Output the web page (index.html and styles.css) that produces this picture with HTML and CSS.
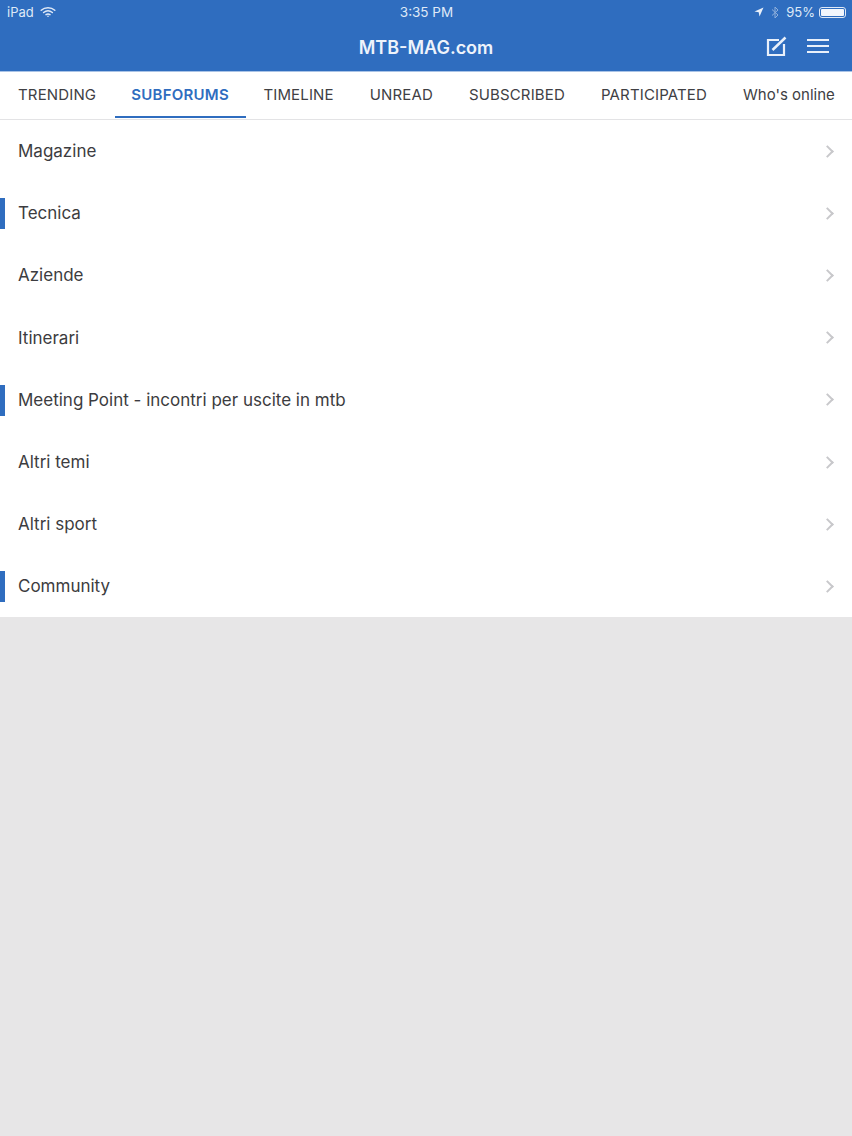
FILE: index.html
```html
<!DOCTYPE html>
<html lang="en">
<head>
    <meta charset="UTF-8">
    <title>MTB-MAG.com</title>
    <link rel="stylesheet" href="styles.css">
</head>
<body>
    <header class="top">
        <div class="status">
            <div class="status-left">
                <span>iPad</span>
                <svg class="wifi" width="16" height="12" viewBox="0 0 16 12" fill="none" stroke="#dfe9f7" stroke-width="1.5" stroke-linecap="round">
                    <path d="M1.2 4.2C5 .9 11 .9 14.8 4.2"/>
                    <path d="M3.6 6.5c2.6-2 6.2-2 8.8 0"/>
                    <path d="M6 8.6c1.2-.8 2.8-.8 4 0"/>
                    <circle cx="8" cy="10.3" r=".8" fill="#dfe9f7" stroke="none"/>
                </svg>
            </div>
            <div class="status-time">3:35 PM</div>
            <div class="status-right">
                <svg class="arrow" width="10" height="10" viewBox="0 0 10 10"><path d="M9.5 .5L.5 4.600l4.200.7.8 4.200z" fill="#e8eff9"/></svg>
                <svg class="bluetooth" width="8" height="13" viewBox="0 0 8 13" fill="none" stroke="#8fb0dc" stroke-width="1"><path d="M1 3.500l6 5.500-3 3V1l3 3-6 5.500"/></svg>
                <span>95%</span>
                <div class="battery"><div class="battery-level"></div></div>
            </div>
        </div>
        <div class="navbar">
            <div class="navbar-title">MTB-MAG.com</div>
            <div class="navbar-icons">
                <svg width="22" height="22" viewBox="0 0 22 22" fill="none" stroke="#e9f0fa">
                    <path d="M14 5H3v15h16V9" stroke-width="2.200"/>
                    <path d="M7.500 15L20.500 2.500" stroke-width="2.500"/>
                </svg>
                <div class="menu-icon"><span></span><span></span><span></span></div>
            </div>
        </div>
    </header>

    <nav class="tabs">
        <a class="tab">TRENDING</a>
        <a class="tab tab-active">SUBFORUMS</a>
        <a class="tab">TIMELINE</a>
        <a class="tab">UNREAD</a>
        <a class="tab">SUBSCRIBED</a>
        <a class="tab">PARTICIPATED</a>
        <a class="tab tab-plain">Who's online</a>
    </nav>

    <ul class="forums">
        <li class="forum"><span>Magazine</span><i class="chevron"></i></li>
        <li class="forum forum-marked"><span>Tecnica</span><i class="chevron"></i></li>
        <li class="forum"><span>Aziende</span><i class="chevron"></i></li>
        <li class="forum"><span>Itinerari</span><i class="chevron"></i></li>
        <li class="forum forum-marked"><span>Meeting Point - incontri per uscite in mtb</span><i class="chevron"></i></li>
        <li class="forum"><span>Altri temi</span><i class="chevron"></i></li>
        <li class="forum"><span>Altri sport</span><i class="chevron"></i></li>
        <li class="forum forum-marked"><span>Community</span><i class="chevron"></i></li>
    </ul>
</body>
</html>
```
FILE: styles.css
```css
* {
    box-sizing: border-box;
}
html, body {
    height: 100%;
}
body {
    margin: 0;
    background: #e7e6e7;
    font-family: "Inter", "Liberation Sans", sans-serif;
    overflow: hidden;
}
.top {
    height: 72px;
    background: #2f6dbf;
    border-bottom: 1px solid #a9c3e6;
    color: #fff;
}
.status {
    height: 24px;
    padding: 0 6px 0 7px;
    display: flex;
    justify-content: space-between;
    align-items: center;
    font-size: 13px;
    color: #dfe9f7;
}
.status-left, .status-right {
    width: 200px;
    display: flex;
    align-items: center;
    gap: 6px;
}
.status-right {
    justify-content: flex-end;
    gap: 4px;
}
.arrow {
    margin-right: 3px;
}
.bluetooth {
    margin-right: 3px;
}
.status-time {
    font-size: 13.500px;
}
.battery {
    width: 27px;
    height: 11px;
    padding: 1px;
    border: 1px solid #dfe9f7;
    border-radius: 3px;
}
.battery-level {
    height: 100%;
    background: #f2f6fc;
    border-radius: 1px;
}
.navbar {
    height: 47px;
    display: flex;
    align-items: center;
    justify-content: center;
    position: relative;
}
.navbar-title {
    font-size: 18px;
    font-weight: 600;
    color: #eef3fb;
}
.navbar-icons {
    position: absolute;
    right: 23px;
    top: 11px;
    display: flex;
    align-items: center;
    gap: 20px;
}
.menu-icon {
    width: 22px;
    display: flex;
    flex-direction: column;
    gap: 4px;
}
.menu-icon span {
    height: 2px;
    background: #e9f0fa;
}
.tabs {
    height: 48px;
    padding-left: 1px;
    display: flex;
    background: #fff;
    border-bottom: 1px solid #e3e3e5;
}
.tab {
    padding: 0 19px 0 17px;
    line-height: 45px;
    font-size: 15px;
    letter-spacing: .15px;
    white-space: nowrap;
    color: #404044;
}
.tab-active {
    height: 46px;
    padding: 0 17.500px 0 16px;
    font-weight: 600;
    letter-spacing: .25px;
    color: #2f6dbf;
    border-bottom: 2px solid #2f6dbf;
}
.tab-plain {
    letter-spacing: 0;
}
.forums {
    margin: 0;
    padding: 0;
    list-style: none;
    background: #fff;
    height: 497px;
}
.forum {
    height: 62.200px;
    padding: 0 18px;
    display: flex;
    align-items: center;
    justify-content: space-between;
    font-size: 17px;
    color: #3c3c40;
    position: relative;
}
.forum-marked::before {
    content: "";
    position: absolute;
    left: 0;
    top: 16px;
    width: 5px;
    height: 31px;
    background: #2f6dbf;
}
.chevron {
    width: 9px;
    height: 9px;
    margin-right: 2px;
    border-top: 2px solid #c8c8cb;
    border-right: 2px solid #c8c8cb;
    transform: rotate(45deg);
}
```
